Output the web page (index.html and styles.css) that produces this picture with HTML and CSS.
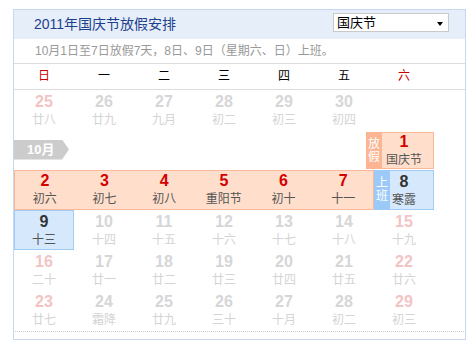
FILE: index.html
```html
<!DOCTYPE html>
<html lang="zh-CN">
<head>
    <meta charset="UTF-8">
    <title>2011年国庆节放假安排</title>
    <link rel="stylesheet" href="styles.css">
</head>
<body>

<div class="holiday">
    <div class="head">
        <h2 class="title">2011年国庆节放假安排</h2>
        <div class="picker">国庆节<span class="caret"></span></div>
    </div>
    <p class="note">10月1日至7日放假7天，8日、9日（星期六、日）上班。</p>

    <div class="weekdays">
        <span class="red">日</span><span>一</span><span>二</span><span>三</span><span>四</span><span>五</span><span class="red">六</span>
    </div>

    <div class="week">
        <div class="day dim sun"><b>25</b><i>廿八</i></div>
        <div class="day dim"><b>26</b><i>廿九</i></div>
        <div class="day dim"><b>27</b><i>九月</i></div>
        <div class="day dim"><b>28</b><i>初二</i></div>
        <div class="day dim"><b>29</b><i>初三</i></div>
        <div class="day dim"><b>30</b><i>初四</i></div>
    </div>

    <div class="week">
        <div class="month">10月</div>
        <div class="day off first"><span class="tag">放假</span><b>1</b><i>国庆节</i></div>
    </div>

    <div class="week">
        <div class="leave">
            <div class="day"><b>2</b><i>初六</i></div>
            <div class="day"><b>3</b><i>初七</i></div>
            <div class="day"><b>4</b><i>初八</i></div>
            <div class="day"><b>5</b><i>重阳节</i></div>
            <div class="day"><b>6</b><i>初十</i></div>
            <div class="day"><b>7</b><i>十一</i></div>
        </div>
        <div class="day work"><span class="tag">上班</span><b>8</b><i>寒露</i></div>
    </div>

    <div class="week">
        <div class="day work solo"><b>9</b><i>十三</i></div>
        <div class="day dim"><b>10</b><i>十四</i></div>
        <div class="day dim"><b>11</b><i>十五</i></div>
        <div class="day dim"><b>12</b><i>十六</i></div>
        <div class="day dim"><b>13</b><i>十七</i></div>
        <div class="day dim"><b>14</b><i>十八</i></div>
        <div class="day dim sun"><b>15</b><i>十九</i></div>
    </div>

    <div class="week">
        <div class="day dim sun"><b>16</b><i>二十</i></div>
        <div class="day dim"><b>17</b><i>廿一</i></div>
        <div class="day dim"><b>18</b><i>廿二</i></div>
        <div class="day dim"><b>19</b><i>廿三</i></div>
        <div class="day dim"><b>20</b><i>廿四</i></div>
        <div class="day dim"><b>21</b><i>廿五</i></div>
        <div class="day dim sun"><b>22</b><i>廿六</i></div>
    </div>

    <div class="week">
        <div class="day dim sun"><b>23</b><i>廿七</i></div>
        <div class="day dim"><b>24</b><i>霜降</i></div>
        <div class="day dim"><b>25</b><i>廿九</i></div>
        <div class="day dim"><b>26</b><i>三十</i></div>
        <div class="day dim"><b>27</b><i>十月</i></div>
        <div class="day dim"><b>28</b><i>初二</i></div>
        <div class="day dim sun"><b>29</b><i>初三</i></div>
    </div>

    <div class="foot"></div>
</div>

</body>
</html>
```

FILE: styles.css
```css
body {
    font-family: "Liberation Sans", "Noto Sans CJK SC", sans-serif;
    margin: 0;
    padding: 0;
    background: #fff;
    color: #333;
}
.holiday {
    width: 451px;
    margin: 9px 0 0 13px;
    border: 1px solid #c6d7f0;
}

/* title bar */
.head {
    display: flex;
    justify-content: space-between;
    align-items: flex-start;
    height: 29px;
    background: #e6eef9;
}
.title {
    margin: 0;
    padding-left: 20px;
    font-size: 14px;
    font-weight: normal;
    line-height: 29px;
    color: #1d3f8c;
}
.picker {
    position: relative;
    width: 111px;
    height: 17px;
    margin: 3px 16px 0 0;
    padding-left: 3px;
    border: 1px solid #c9c9c9;
    background: #fff;
    font-size: 13px;
    line-height: 17px;
    color: #000;
}
.caret {
    position: absolute;
    right: 5px;
    top: 8px;
    border-left: 3.5px solid transparent;
    border-right: 3.5px solid transparent;
    border-top: 4px solid #000;
}
.note {
    margin: 0;
    padding-left: 21px;
    height: 24px;
    font-size: 12px;
    line-height: 24px;
    color: #999;
}

/* week header */
.weekdays {
    display: grid;
    grid-template-columns: repeat(7, 60px);
    height: 25px;
    border-top: 1px solid #ddd;
    border-bottom: 1px solid #ddd;
    font-size: 12px;
    line-height: 25px;
    text-align: center;
    color: #000;
}
.red {
    color: #c00;
}

/* calendar rows */
.week {
    display: grid;
    grid-template-columns: repeat(7, 60px);
    height: 39px;
    margin-bottom: 1px;
}
.day {
    position: relative;
    box-sizing: border-box;
    padding-top: 3px;
    text-align: center;
}
.day b {
    display: block;
    font-size: 16px;
    line-height: 18px;
}
.day i {
    display: block;
    font-style: normal;
    font-size: 12px;
    line-height: 18px;
}
.dim b {
    color: #d6d6d8;
}
.dim i {
    color: #d4d4d4;
}
.dim.sun b {
    color: #f2c4c4;
}

.month {
    grid-column: 1 / 3;
    align-self: center;
    width: 42px;
    height: 20px;
    padding-left: 13px;
    background: #ccc;
    clip-path: polygon(0 0, 48px 0, 55px 50%, 48px 100%, 0 100%);
    font-size: 13px;
    font-weight: bold;
    line-height: 20px;
    color: #fff;
}

/* holiday and working days */
.leave {
    grid-column: 1 / 7;
    display: grid;
    grid-template-columns: repeat(6, 1fr);
    border: 1px solid #fbb899;
    background: #ffdfcc;
}
.leave .day {
    padding-top: 1px;
}
.leave b {
    color: #d40000;
}
.leave i {
    color: #555;
}
.off {
    grid-column: 7;
    height: 37px;
    margin: 2px 0 0 -8px;
    padding: 0 0 0 8px;
    border: 1px solid #fbb899;
    background: #ffdfcc;
}
.off b {
    color: #d40000;
}
.off i,
.work i {
    color: #555;
}
.work {
    grid-column: 7;
    padding-top: 2px;
    border: 1px solid #a0cbf5;
    background: #d6e8fc;
}
.work b {
    color: #333;
}
.work.solo {
    grid-column: 1;
}
.tag {
    position: absolute;
    top: -1px;
    bottom: -1px;
    left: -1px;
    width: 16px;
    display: flex;
    flex-direction: column;
    justify-content: center;
    font-size: 12px;
    line-height: 13px;
    color: #fff;
}
.off .tag {
    background: #fbb592;
}
.work .tag {
    background: #9ccaf8;
}

.foot {
    height: 7px;
    margin: 2px 1px 0;
    border-top: 1px dotted #ccc;
}
```
